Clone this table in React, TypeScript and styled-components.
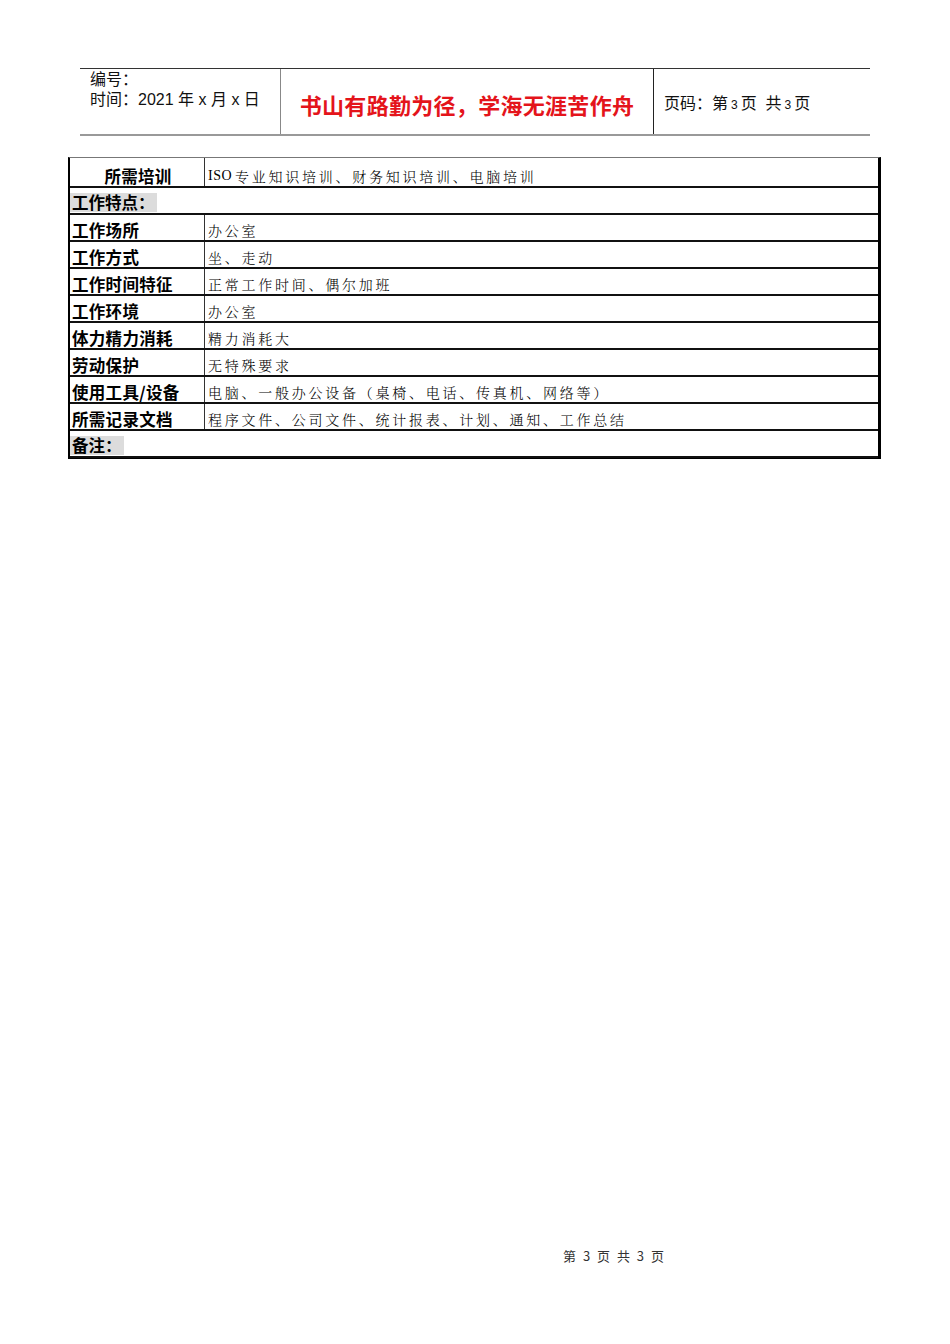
import React from "react";
import styled, { createGlobalStyle } from "styled-components";

const Global = createGlobalStyle`
  html, body { margin: 0; padding: 0; background: #fff; }
  body { font-family: "Liberation Sans", "Noto Sans CJK SC", sans-serif; color: #000; }
`;

const Page = styled.div`
  width: 950px;
  min-height: 1344px;
  display: flex;
  flex-direction: column;
  box-sizing: border-box;
  padding-top: 68px;
`;

const Header = styled.div`
  margin-left: 80px;
  width: 790px;
  height: 68px;
  box-sizing: border-box;
  border-top: 1px solid #333;
  border-bottom: 2px solid #999;
  display: grid;
  grid-template-columns: 201px 373px 1fr;
`;

const HeaderCell = styled.div<{ $divider?: string; $center?: boolean }>`
  box-sizing: border-box;
  border-right: ${(p) => (p.$divider ? `1px solid ${p.$divider}` : "none")};
  display: flex;
  flex-direction: column;
  justify-content: ${(p) => (p.$center ? "center" : "flex-start")};
  align-items: ${(p) => (p.$center ? "center" : "flex-start")};
  padding: ${(p) => (p.$center ? "0" : "1px 0 0 10px")};
  font-size: 16px;
  line-height: 20px;
  color: #111;
`;

const InfoCell = styled(HeaderCell)`
  justify-content: center;
  padding: 6px 0 0 10px;
`;

const Motto = styled.div`
  font-family: "Noto Sans CJK SC", sans-serif;
  font-size: 22px;
  font-weight: 700;
  color: #e4141b;
  letter-spacing: 0.3px;
  padding-top: 4px;
`;

const Num = styled.span`
  font-size: 12px;
  margin: 0 3px;
`;

const Table = styled.div`
  margin: 21px 0 0 68px;
  width: 813px;
  box-sizing: border-box;
  border-left: 2px solid #000;
  border-right: 3px solid #000;
  border-top: 1px solid #777;
  border-bottom: 1px solid #000;
  display: flex;
  flex-direction: column;
`;

const Row = styled.div<{ $h: number }>`
  height: ${(p) => p.$h}px;
  box-sizing: content-box;
  border-bottom: 2px solid #111;
  display: grid;
  grid-template-columns: 135px 1fr;
`;

const SectionRow = styled.div`
  height: 24px;
  border-bottom: 2px solid #111;
  display: flex;
  align-items: flex-end;
  padding-bottom: 1px;
  box-sizing: content-box;
`;

const SectionLabel = styled.span`
  background: #dcdcdc;
  font-family: "Noto Sans CJK SC", sans-serif;
  font-weight: 700;
  font-size: 16.5px;
  line-height: 19px;
  padding: 0 2px 0 2px;
  height: 19px;
  display: inline-flex;
  align-items: flex-end;
`;

const Label = styled.div<{ $center?: boolean }>`
  border-right: 1px solid #333;
  display: flex;
  align-items: flex-end;
  justify-content: ${(p) => (p.$center ? "center" : "flex-start")};
  padding: 0 0 0 2px;
  font-family: "Noto Sans CJK SC", sans-serif;
  font-weight: 700;
  font-size: 16.5px;
  letter-spacing: 0.3px;
  line-height: 20px;
  white-space: nowrap;
  color: #000;
`;

const Value = styled.div`
  display: flex;
  align-items: flex-end;
  padding: 0 0 0 3px;
  font-family: "Noto Serif CJK SC", "Noto Sans CJK SC", serif;
  font-weight: 300;
  font-size: 14px;
  letter-spacing: 2.75px;
  line-height: 20px;
  white-space: nowrap;
  color: #000;
`;

const Latin = styled.span`
  font-family: "Liberation Serif", serif;
  letter-spacing: 0.5px;
  margin-right: 3px;
`;

const Footer = styled.div`
  margin-top: auto;
  padding: 0 0 80px 563px;
  font-family: "Noto Sans CJK SC", sans-serif;
  font-size: 13px;
  line-height: 16px;
  color: #333;
  word-spacing: 3px;
  letter-spacing: 0.5px;
`;

const rows: [string, string][] = [
  ["工作场所", "办公室"],
  ["工作方式", "坐、走动"],
  ["工作时间特征", "正常工作时间、偶尔加班"],
  ["工作环境", "办公室"],
  ["体力精力消耗", "精力消耗大"],
  ["劳动保护", "无特殊要求"],
  ["使用工具/设备", "电脑、一般办公设备（桌椅、电话、传真机、网络等）"],
  ["所需记录文档", "程序文件、公司文件、统计报表、计划、通知、工作总结"],
];

export default function App() {
  return (
    <>
      <Global />
      <Page>
        <Header>
          <HeaderCell $divider="#888">
            <div>编号：</div>
            <div>时间：2021 年 x 月 x 日</div>
          </HeaderCell>
          <HeaderCell $divider="#222" $center>
            <Motto>书山有路勤为径，学海无涯苦作舟</Motto>
          </HeaderCell>
          <InfoCell>
            <div>
              页码：第<Num>3</Num>页&nbsp;&nbsp;共<Num>3</Num>页
            </div>
          </InfoCell>
        </Header>

        <Table>
          <Row $h={28}>
            <Label $center>所需培训</Label>
            <Value>
              <Latin>ISO</Latin>专业知识培训、财务知识培训、电脑培训
            </Value>
          </Row>
          <SectionRow>
            <SectionLabel>工作特点：</SectionLabel>
          </SectionRow>
          {rows.map(([k, v]) => (
            <Row $h={25} key={k}>
              <Label>{k}</Label>
              <Value>{v}</Value>
            </Row>
          ))}
          <SectionRow>
            <SectionLabel>备注：</SectionLabel>
          </SectionRow>
        </Table>

        <Footer>第 3 页 共 3 页</Footer>
      </Page>
    </>
  );
}
